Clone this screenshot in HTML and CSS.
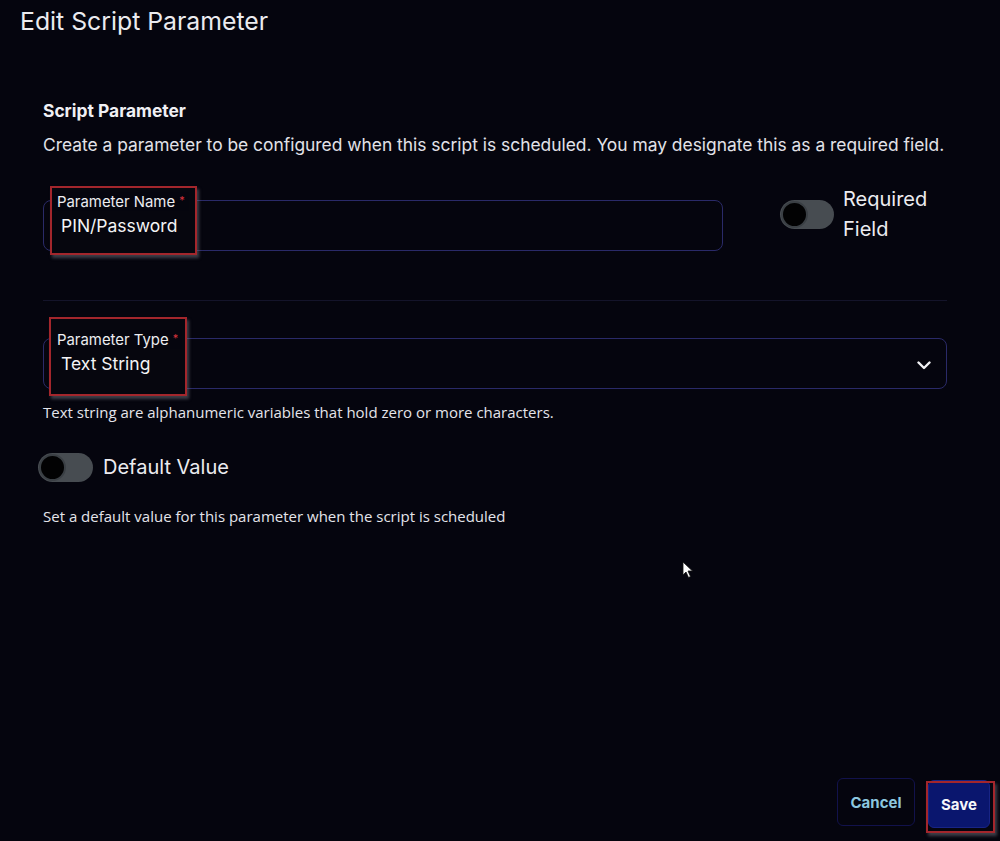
FILE: index.html
```html
<!DOCTYPE html>
<html lang="en">
<head>
<meta charset="utf-8">
<title>Edit Script Parameter</title>
<link rel="stylesheet" href="styles.css">
</head>
<body>
<div class="page">
  <header class="header">
    <h1 class="title">Edit Script Parameter</h1>
  </header>

  <main class="content">
    <h2 class="section-title">Script Parameter</h2>
    <p class="section-desc">Create a parameter to be configured when this script is scheduled. You may designate this as a required field.</p>

    <div class="row-name">
      <div class="field field-name">
        <span class="field-label">Parameter Name <span class="req">*</span></span>
        <span class="field-value">PIN/Password</span>
      </div>
      <div class="toggle-group">
        <span class="toggle"><span class="knob"></span></span>
        <span class="toggle-text big">Required<br>Field</span>
      </div>
    </div>

    <div class="divider"></div>

    <div class="field field-type">
      <span class="field-label">Parameter Type <span class="req">*</span></span>
      <span class="field-value">Text String</span>
      <svg class="chevron" width="14" height="9" viewBox="0 0 14 9"><path d="M1.5 1.5 L7 7 L12.5 1.5" fill="none" stroke="#f2f2f5" stroke-width="2.4" stroke-linecap="round" stroke-linejoin="round"/></svg>
    </div>
    <p class="helper">Text string are alphanumeric variables that hold zero or more characters.</p>

    <div class="toggle-row">
      <span class="toggle"><span class="knob"></span></span>
      <span class="toggle-text">Default Value</span>
    </div>
    <p class="helper helper-2">Set a default value for this parameter when the script is scheduled</p>
  </main>

  <footer class="footer">
    <button class="btn btn-cancel">Cancel</button>
    <button class="btn btn-save">Save</button>
  </footer>

  <div class="mark mark-1"></div>
  <div class="mark mark-2"></div>
  <div class="mark mark-3"></div>

  <svg class="cursor" width="12" height="18" viewBox="0 0 12 18"><path d="M1 1 L1 14 L4 11 L6.5 16.5 L8.5 15.5 L6 10 L10.5 10 Z" fill="#ffffff" stroke="#111" stroke-width="0.8"/></svg>
</div>
</body>
</html>
```

FILE: styles.css
```css
* { box-sizing: border-box; }

html, body {
  margin: 0;
  padding: 0;
  background: #05050e;
}

body {
  font-family: Inter, "Noto Sans", "Liberation Sans", sans-serif;
  color: #ececf0;
}

.page {
  position: relative;
  min-height: 841px;
  display: flex;
  flex-direction: column;
}

.header {
  padding: 7px 20px 0;
}

.title {
  margin: 0;
  font-size: 24.8px;
  line-height: 29px;
  font-weight: 400;
  color: #ebebef;
}

.content {
  padding: 0 53px 0 43px;
}

.section-title {
  margin: 65px 0 0;
  font-size: 17.4px;
  line-height: 20px;
  font-weight: 700;
  color: #f0f0f4;
}

.section-desc {
  margin: 12px 0 0;
  font-size: 17.4px;
  line-height: 24px;
  color: #e2e2e8;
  white-space: nowrap;
}

.row-name {
  display: flex;
  align-items: flex-start;
  margin-top: 27px;
}

.field {
  position: relative;
  height: 51px;
  border: 1px solid #2a2a68;
  border-radius: 8px;
  padding: 15px 0 0 17px;
}

.field-name {
  width: 680px;
  margin-top: 16px;
  flex: none;
}

.field-label {
  position: absolute;
  top: -9px;
  left: 9px;
  padding: 0 4px;
  background: #05050e;
  font-size: 14.9px;
  line-height: 17px;
  color: #ececf0;
  z-index: 2;
}

.req {
  color: #d8323c;
  font-size: 11px;
  vertical-align: 3px;
}

.field-value {
  position: relative;
  z-index: 2;
  display: block;
  font-size: 17.5px;
  line-height: 20px;
  color: #f4f4f6;
}

.toggle-group {
  display: flex;
  align-items: center;
  gap: 9px;
  margin-left: 57px;
}

.toggle {
  display: flex;
  align-items: center;
  width: 54px;
  height: 29px;
  border-radius: 15px;
  background: #474c51;
  padding: 0 1px;
  flex: none;
}

.knob {
  width: 27px;
  height: 27px;
  border-radius: 50%;
  background: #020203;
  border: 2px solid #3a3f44;
}

.toggle-text {
  font-size: 20px;
  line-height: 29px;
  color: #ececf0;
}

.toggle-text.big {
  line-height: 30px;
}

.divider {
  margin-top: 49px;
  height: 1px;
  background: #14142a;
}

.field-type {
  margin-top: 37px;
}

.chevron {
  position: absolute;
  right: 15px;
  top: 22px;
}

.helper {
  margin: 13px 0 0;
  font-family: "Open Sans", "Noto Sans", sans-serif;
  font-size: 15px;
  line-height: 20px;
  color: #e4e4ea;
}

.toggle-row {
  display: flex;
  align-items: center;
  gap: 10px;
  margin: 31px 0 0 -5px;
}

.toggle-row .toggle {
  width: 55px;
}

.helper-2 {
  margin-top: 24px;
}

.footer {
  margin-top: auto;
  display: flex;
  justify-content: flex-end;
  align-items: flex-end;
  gap: 13px;
  padding: 0 10px 13px 0;
}

.btn {
  font-family: Inter, "Noto Sans", sans-serif;
  font-size: 15px;
  font-weight: 700;
  height: 48px;
  border-radius: 6px;
  cursor: pointer;
}

.btn-cancel {
  width: 78px;
  margin-bottom: 2px;
  background: transparent;
  border: 1px solid #12124c;
  color: #8cc7df;
}

.btn-save {
  width: 62px;
  background: #0a166e;
  border: 1px solid #182486;
  color: #f6f6fa;
}

.mark {
  position: absolute;
  border: 2px solid #a3262c;
  background: #06060e;
  box-shadow: 2px 3px 3px rgba(110, 110, 120, 0.55);
  z-index: 1;
}

.mark-1 { left: 50px; top: 186px; width: 147px; height: 69px; }
.mark-2 { left: 49px; top: 317px; width: 138px; height: 79px; }
.mark-3 { left: 926px; top: 781px; width: 69px; height: 52px; background: transparent; z-index: 3; }

.cursor {
  position: absolute;
  left: 682px;
  top: 561px;
}
```
